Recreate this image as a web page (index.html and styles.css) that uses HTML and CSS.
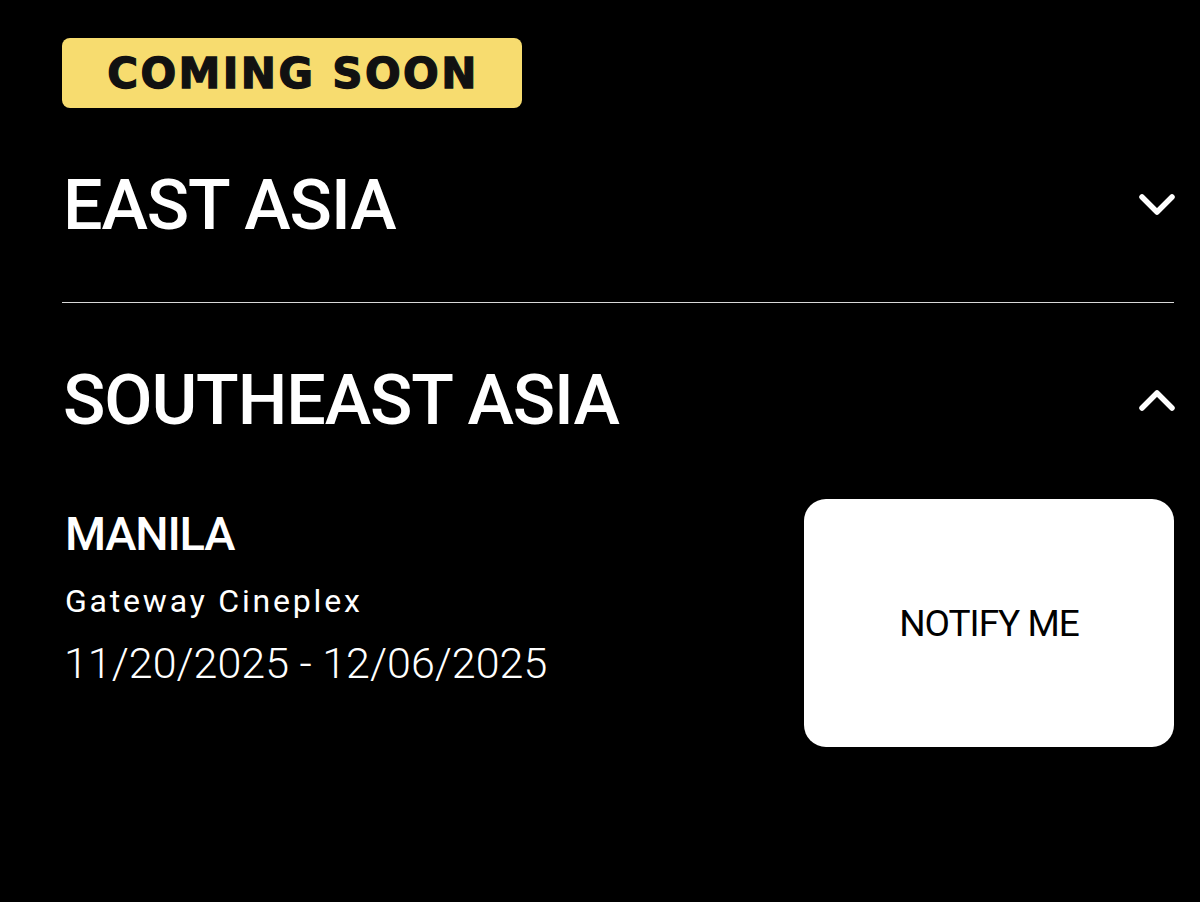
FILE: index.html
```html
<!DOCTYPE html>
<html>
<head>
<meta charset="utf-8">
<link rel="stylesheet" href="styles.css">
</head>
<body>
<main class="page">
  <div class="badge">COMING SOON</div>
  <section class="region">
    <div class="region-head bordered">
      <h2 class="region-title">EAST ASIA</h2>
      <svg class="chev" width="40" height="26" viewBox="0 0 40 26"><polyline points="5,5 20,20 35,5" fill="none" stroke="#fff" stroke-width="5.5" stroke-linecap="round" stroke-linejoin="round"/></svg>
    </div>
  </section>
  <section class="region">
    <div class="region-head">
      <h2 class="region-title">SOUTHEAST ASIA</h2>
      <svg class="chev" width="40" height="26" viewBox="0 0 40 26"><polyline points="5,21 20,6 35,21" fill="none" stroke="#fff" stroke-width="5.5" stroke-linecap="round" stroke-linejoin="round"/></svg>
    </div>
    <div class="event">
      <div class="event-info">
        <div class="city">MANILA</div>
        <div class="venue">Gateway Cineplex</div>
        <div class="dates">11/20/2025 - 12/06/2025</div>
      </div>
      <button class="notify">NOTIFY ME</button>
    </div>
  </section>
</main>
</body>
</html>
```
FILE: styles.css
```css
html, body {
  margin: 0;
  padding: 0;
  background: #000;
  color: #fff;
}
.page {
  padding: 38px 26px 0 62px;
  font-family: Roboto, "Liberation Sans", sans-serif;
}
.badge {
  width: 460px;
  height: 70px;
  box-sizing: border-box;
  background: #f7dc6f;
  border-radius: 8px;
  color: #111;
  font-family: "DejaVu Sans", "Liberation Sans", sans-serif;
  font-weight: 700;
  font-size: 42px;
  letter-spacing: 2.4px;
  -webkit-text-stroke: 1.3px #111;
  display: flex;
  align-items: center;
  justify-content: center;
  padding-top: 1px;
  padding-left: 2px;
}
.region-head {
  height: 194px;
  display: flex;
  align-items: center;
  justify-content: space-between;
}
.region-head.bordered {
  border-bottom: 1px solid #d8d8d8;
}
.region-title {
  margin: 0;
  font-weight: 500;
  font-size: 70px;
  letter-spacing: -1.1px;
  line-height: 1;
  padding-left: 1px;
}
.chev {
  display: block;
  margin-right: -3px;
}
.event {
  display: flex;
  justify-content: space-between;
  align-items: flex-start;
  padding-top: 2px;
}
.event-info {
  padding-top: 11px;
}
.city {
  font-size: 47px;
  font-weight: 500;
  letter-spacing: -1.2px;
  line-height: 1;
  padding-left: 3px;
}
.venue {
  font-size: 32px;
  font-weight: 400;
  margin-top: 28px;
  line-height: 1;
  padding-left: 3px;
  letter-spacing: 2.8px;
}
.dates {
  font-size: 43px;
  font-weight: 300;
  margin-top: 25px;
  line-height: 1;
  padding-left: 2px;
  letter-spacing: 0;
}
.notify {
  width: 370px;
  height: 248px;
  background: #fff;
  border: none;
  border-radius: 22px;
  color: #000;
  font-family: Roboto, "Liberation Sans", sans-serif;
  font-size: 37px;
  font-weight: 400;
  letter-spacing: -1px;
  padding: 0;
}
```
